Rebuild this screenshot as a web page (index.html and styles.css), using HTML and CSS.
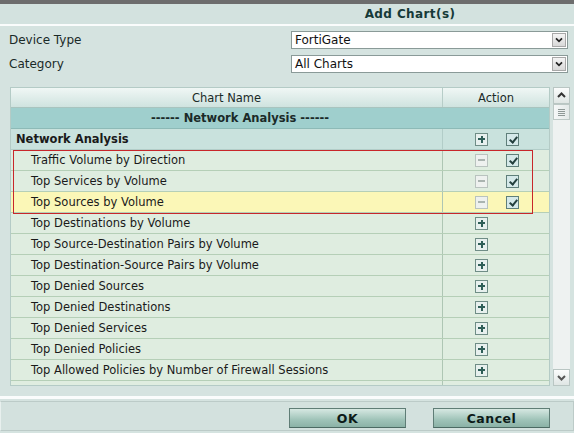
FILE: index.html
```html
<!DOCTYPE html>
<html>
<head>
<meta charset="utf-8">
<link rel="stylesheet" href="styles.css">
</head>
<body>
<div class="topbar"></div>
<div class="title"><span>Add Chart(s)</span></div>
<div class="whiteline"></div>
<div class="form">
  <div class="frow"><span class="flabel">Device Type</span><div class="select"><span>FortiGate</span><i class="arrow"><svg width="14" height="14" viewBox="0 0 14 14"><path d="M3.5 5 L7 8.5 L10.5 5" fill="none" stroke="#222" stroke-width="2"/></svg></i></div></div>
  <div class="frow"><span class="flabel">Category</span><div class="select"><span>All Charts</span><i class="arrow"><svg width="14" height="14" viewBox="0 0 14 14"><path d="M3.5 5 L7 8.5 L10.5 5" fill="none" stroke="#222" stroke-width="2"/></svg></i></div></div>
</div>
<div class="tablearea">
  <div class="table">
    <div class="thead"><div class="c1">Chart Name</div><div class="c2">Action</div></div>
    <div class="section"><div class="c1">------ Network Analysis ------</div></div>
    <div class="list">
      <div class="row group"><div class="c1">Network Analysis</div><div class="c2"><span class="ic plus"></span><span class="ic chk"></span></div></div>
      <div class="row"><div class="c1">Traffic Volume by Direction</div><div class="c2"><span class="ic minus"></span><span class="ic chk"></span></div></div>
      <div class="row"><div class="c1">Top Services by Volume</div><div class="c2"><span class="ic minus"></span><span class="ic chk"></span></div></div>
      <div class="row hl"><div class="c1">Top Sources by Volume</div><div class="c2"><span class="ic minus"></span><span class="ic chk"></span></div></div>
      <div class="row"><div class="c1">Top Destinations by Volume</div><div class="c2"><span class="ic plus"></span></div></div>
      <div class="row"><div class="c1">Top Source-Destination Pairs by Volume</div><div class="c2"><span class="ic plus"></span></div></div>
      <div class="row"><div class="c1">Top Destination-Source Pairs by Volume</div><div class="c2"><span class="ic plus"></span></div></div>
      <div class="row"><div class="c1">Top Denied Sources</div><div class="c2"><span class="ic plus"></span></div></div>
      <div class="row"><div class="c1">Top Denied Destinations</div><div class="c2"><span class="ic plus"></span></div></div>
      <div class="row"><div class="c1">Top Denied Services</div><div class="c2"><span class="ic plus"></span></div></div>
      <div class="row"><div class="c1">Top Denied Policies</div><div class="c2"><span class="ic plus"></span></div></div>
      <div class="row"><div class="c1">Top Allowed Policies by Number of Firewall Sessions</div><div class="c2"><span class="ic plus"></span></div></div>
      <div class="row partial"><div class="c1"></div><div class="c2"><span class="ic minus"></span></div></div>
      <div class="redbox"></div>
    </div>
  </div>
  <div class="scroll">
    <div class="sbtn"><svg width="15" height="15" viewBox="0 0 15 15"><path d="M4 9 L7.5 5.5 L11 9" fill="none" stroke="#333" stroke-width="2"/></svg></div>
    <div class="thumb"><span></span><span></span><span></span><span></span></div>
    <div class="track"></div>
    <div class="sbtn"><svg width="15" height="15" viewBox="0 0 15 15"><path d="M4 6 L7.5 9.5 L11 6" fill="none" stroke="#555" stroke-width="2"/></svg></div>
  </div>
</div>
<div class="whiteline2"></div>
<div class="footer">
  <button class="btn">OK</button>
  <button class="btn">Cancel</button>
</div>
</body>
</html>
```
FILE: styles.css
```css
html, body { margin: 0; padding: 0; }
body {
  width: 574px; height: 433px; overflow: hidden;
  background: #d5e3e0;
  font-family: "DejaVu Sans", Verdana, sans-serif;
  color: #111;
}
.topbar { height: 4px; background: #6d6d6d; }
.title {
  height: 20px; padding-left: 246px;
  display: flex; align-items: center; justify-content: center;
  font-weight: bold; font-size: 12px; color: #163a38; letter-spacing: 0.4px;
  background: #d3e2df;
}
.whiteline { height: 2px; background: #fafcfc; }
.form { padding: 5px 6px 0 9px; display: flex; flex-direction: column; gap: 6px; }
.frow { display: flex; justify-content: space-between; align-items: center; height: 18px; }
.flabel { font-size: 12px; color: #1a2a28; }
.select {
  width: 277px; height: 18px; box-sizing: border-box; background: #fff; border: 1px solid #8a9a98;
  display: flex; align-items: center; justify-content: space-between;
  font-size: 12px; color: #111; padding-left: 3px;
}
.arrow {
  width: 14px; height: 14px; margin-right: 1px; display: flex;
  background: linear-gradient(#f4f4f4, #d8d8d8); border: 1px solid #a8a8a8; box-sizing: border-box;
  align-items: center; justify-content: center;
}
.arrow svg { width: 12px; height: 12px; }
.tablearea { display: flex; margin-top: 14px; padding-left: 10px; height: 299px; }
.table {
  width: 540px; box-sizing: border-box; border: 1px solid #b4cbc6; background: #dfede0;
  display: flex; flex-direction: column; overflow: hidden;
}
.thead {
  flex-shrink: 0;
  display: flex; height: 19px; border-bottom: 1px solid #a9c4bf;
  background: linear-gradient(#f0f7f5, #cfe3df);
  font-size: 11.5px; color: #1a2a28;
}
.thead .c1 { width: 431px; display: flex; align-items: center; justify-content: center; border-right: 1px solid #b7cdc8; }
.thead .c2 { flex: 1; display: flex; align-items: center; justify-content: center; }
.section {
  flex-shrink: 0;
  height: 20px; background: #9fcfcd; border-bottom: 1px solid #8dbab7;
  display: flex;
  font-weight: bold; font-size: 11.5px; color: #1a2a28;
}
.section .c1 { width: 432px; box-sizing: border-box; padding-left: 26px; display: flex; align-items: center; justify-content: center; }
.list { position: relative; flex: 1; }
.row {
  display: flex; height: 20px; border-bottom: 1px solid #b5cfb7;
  background: #dfede0; font-size: 11.5px; color: #1a1a1a;
}
.row .c1 { width: 432px; box-sizing: border-box; padding-left: 20px; border-right: 1px solid #aec6b4; display: flex; align-items: center; white-space: nowrap; }
.row .c2 { flex: 1; display: flex; align-items: center; padding-left: 32px; gap: 18px; }
.row.group { background: #c9e2dd; border-bottom-color: #b2cdc8; }
.row.group .c1 { padding-left: 5px; font-weight: bold; border-right-color: #b2cdc8; }
.row.hl { background: #fbf7b7; }
.redbox {
  position: absolute; left: 2px; top: 21px; width: 518px; height: 62px;
  border: 1px solid #c8262a; pointer-events: none;
}
.ic { width: 13px; height: 13px; box-sizing: border-box; display: inline-block; position: relative; }
.plus { border: 1px solid #6f8d86; background: #e7f0ee; }
.plus::before { content: ""; position: absolute; left: 2px; top: 4.5px; width: 7px; height: 2px; background: #2e5e57; }
.plus::after { content: ""; position: absolute; left: 4.5px; top: 2px; width: 2px; height: 7px; background: #2e5e57; }
.minus { border: 1px solid #b9c3bf; background: #eef1ef; }
.minus::before { content: ""; position: absolute; left: 2px; top: 4.5px; width: 7px; height: 2px; background: #aab4b0; }
.chk { border: 1px solid #5f7f7a; background: #d5e9e9; }
.chk::before {
  content: ""; position: absolute; left: 4px; top: 1px; width: 3px; height: 6px;
  border: solid #24403e; border-width: 0 2px 2px 0; transform: rotate(40deg);
}
.scroll { width: 17px; margin-left: 3px; display: flex; flex-direction: column; background: #eef2f1; }
.sbtn {
  width: 17px; height: 17px; box-sizing: border-box; border: 1px solid #b9c6c3;
  background: linear-gradient(#fbfcfc, #dfe6e4); display: flex; align-items: center; justify-content: center;
}
.thumb {
  height: 16px; box-sizing: border-box; border: 1px solid #bcc8c5; background: linear-gradient(90deg, #f6f8f8, #e3e9e8);
  display: flex; flex-direction: column; align-items: center; justify-content: center; gap: 1px;
}
.thumb span { width: 7px; height: 1px; background: #8e9896; }
.track { flex: 1; }
.whiteline2 { height: 3px; background: #fafcfc; margin-top: 10px; }
.footer {
  margin-top: 2px; height: 28px; border: 1px solid #bccbc8; border-left-color: #e8f0ee;
  background: #d3e1de; display: flex; align-items: center; gap: 27px; padding-left: 288px;
}
.btn {
  width: 117px; height: 20px; margin-top: 4px; padding: 0;
  border: 1px solid #5f7d76; border-bottom-color: #4c6a63;
  background: linear-gradient(#d6e8e2, #9fc3b8 60%, #8bb2a6);
  font-family: "DejaVu Sans", Verdana, sans-serif; font-weight: bold; font-size: 12.5px; color: #0c1a18;
  letter-spacing: 0.5px;
}
```
